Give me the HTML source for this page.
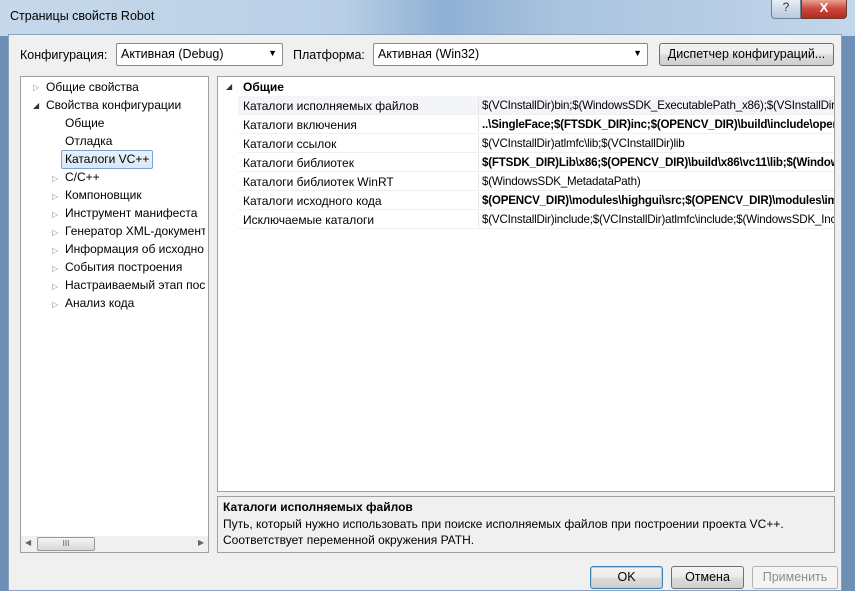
<!DOCTYPE html>
<html><head><meta charset="utf-8"><style>
*{margin:0;padding:0;box-sizing:border-box}
body{width:855px;height:591px;overflow:hidden;position:relative;font-family:"Liberation Sans",sans-serif;font-size:12px;color:#000;background:#6d8fb5}
.a{position:absolute}
.title{left:0;top:0;width:855px;height:36px;background:linear-gradient(90deg,#c6d8ea 0%,#b9cfe6 40%,#8fb0d4 52%,#a9c3de 65%,#c3d6ea 100%)}
.client{left:8px;top:34px;width:834px;height:557px;background:#f0f0f0;border:1px solid #8aa3c0}
.combo{height:23px;background:#fff;border:1px solid #8a8a8a;border-radius:2px;padding:3px 4px;font-size:12.5px}
.combo::after{content:"▼";position:absolute;right:5px;top:4px;font-size:9px}
.btn{height:23px;border:1px solid #707070;border-radius:3px;background:linear-gradient(#f2f2f2 0%,#ebebeb 50%,#dddddd 51%,#cfcfcf 100%);text-align:center;line-height:21px;font-size:12.5px}
.panel{background:#fff;border:1px solid #a0a0a0}
.tr{position:absolute;font-size:12px;white-space:nowrap}
.ar{position:absolute;font-size:8px;color:#8a8a8a}
.row{position:absolute;left:238px;width:596px;height:19px;border-bottom:1px solid #f0f0f0;white-space:nowrap;overflow:hidden}
.row .n{position:absolute;left:5px;top:3px}
.row .v{position:absolute;left:240px;width:356px;overflow:hidden;border-left:1px solid #e6e6e6;padding-left:3px;height:16px;top:1px;padding-top:2px;font-size:11.6px;letter-spacing:-0.2px}
.b{font-weight:bold}
</style></head><body>
<div class="a title"></div>
<div class="a" style="left:10px;top:9px;font-size:12.5px">Страницы свойств Robot</div>
<div class="a" style="left:771px;top:0;width:30px;height:19px;border:1px solid #6d7f99;border-top:none;border-radius:0 0 0 4px;background:linear-gradient(#e6edf5,#b9c9dd);text-align:center;font-size:12px;color:#334">?</div>
<div class="a" style="left:801px;top:0;width:46px;height:19px;border:1px solid #6b3a35;border-top:none;border-radius:0 0 4px 0;background:linear-gradient(#e8a293,#c8473a 50%,#b52b1c);text-align:center;font-weight:bold;color:#fff;font-size:13px">X</div>
<div class="a client"></div>
<div class="a" style="left:20px;top:48px;font-size:12.5px">Конфигурация:</div>
<div class="a combo" style="left:116px;top:43px;width:167px">Активная (Debug)</div>
<div class="a" style="left:293px;top:48px;font-size:12.5px">Платформа:</div>
<div class="a combo" style="left:373px;top:43px;width:275px">Активная (Win32)</div>
<div class="a btn" style="left:659px;top:43px;width:175px">Диспетчер конфигураций...</div>

<div class="a panel" style="left:20px;top:76px;width:189px;height:477px"></div>
<div class="ar" style="left:33px;top:83px">▷</div><div class="tr" style="left:46px;top:80px">Общие свойства</div>
<div class="ar" style="left:33px;top:101px;color:#333">◢</div><div class="tr" style="left:46px;top:98px">Свойства конфигурации</div>
<div class="tr" style="left:65px;top:116px">Общие</div>
<div class="tr" style="left:65px;top:134px">Отладка</div>
<div class="a" style="left:61px;top:150px;width:92px;height:19px;border:1px solid #7da2ce;border-radius:2px;background:linear-gradient(#eaf2fb,#d9e7f7)"></div>
<div class="tr" style="left:65px;top:152px">Каталоги VC++</div>
<div class="ar" style="left:52px;top:174px">▷</div><div class="tr" style="left:65px;top:170px">C/C++</div>
<div class="ar" style="left:52px;top:192px">▷</div><div class="tr" style="left:65px;top:188px">Компоновщик</div>
<div class="ar" style="left:52px;top:210px">▷</div><div class="tr" style="left:65px;top:206px">Инструмент манифеста</div>
<div class="ar" style="left:52px;top:228px">▷</div><div class="tr" style="left:65px;top:224px;width:140px;overflow:hidden">Генератор XML-документ</div>
<div class="ar" style="left:52px;top:246px">▷</div><div class="tr" style="left:65px;top:242px;width:140px;overflow:hidden">Информация об исходно</div>
<div class="ar" style="left:52px;top:264px">▷</div><div class="tr" style="left:65px;top:260px">События построения</div>
<div class="ar" style="left:52px;top:282px">▷</div><div class="tr" style="left:65px;top:278px;width:140px;overflow:hidden">Настраиваемый этап пос</div>
<div class="ar" style="left:52px;top:300px">▷</div><div class="tr" style="left:65px;top:296px">Анализ кода</div>
<div class="a" style="left:21px;top:536px;width:187px;height:16px;background:#f0f0f0"></div>
<div class="a" style="left:25px;top:538px;font-size:8px;color:#666">◀</div>
<div class="a" style="left:198px;top:538px;font-size:8px;color:#666">▶</div>
<div class="a" style="left:37px;top:537px;width:58px;height:14px;border:1px solid #999;border-radius:2px;background:linear-gradient(#f4f4f4,#d8d8d8);font-size:8px;text-align:center;line-height:12px;color:#555">III</div>

<div class="a panel" style="left:217px;top:76px;width:618px;height:416px"></div>
<div class="ar" style="left:226px;top:82px;color:#333">◢</div>
<div class="a b" style="left:243px;top:80px">Общие</div>
<div class="row" style="top:96px;background:#f3f5f8"><span class="n">Каталоги исполняемых файлов</span><span class="v">$(VCInstallDir)bin;$(WindowsSDK_ExecutablePath_x86);$(VSInstallDir)</span></div>
<div class="row" style="top:115px"><span class="n">Каталоги включения</span><span class="v b">..\SingleFace;$(FTSDK_DIR)inc;$(OPENCV_DIR)\build\include\opencv</span></div>
<div class="row" style="top:134px"><span class="n">Каталоги ссылок</span><span class="v">$(VCInstallDir)atlmfc\lib;$(VCInstallDir)lib</span></div>
<div class="row" style="top:153px"><span class="n">Каталоги библиотек</span><span class="v b">$(FTSDK_DIR)Lib\x86;$(OPENCV_DIR)\build\x86\vc11\lib;$(Windows</span></div>
<div class="row" style="top:172px"><span class="n">Каталоги библиотек WinRT</span><span class="v">$(WindowsSDK_MetadataPath)</span></div>
<div class="row" style="top:191px"><span class="n">Каталоги исходного кода</span><span class="v b">$(OPENCV_DIR)\modules\highgui\src;$(OPENCV_DIR)\modules\imgproc</span></div>
<div class="row" style="top:210px"><span class="n">Исключаемые каталоги</span><span class="v">$(VCInstallDir)include;$(VCInstallDir)atlmfc\include;$(WindowsSDK_Inc</span></div>

<div class="a" style="left:217px;top:496px;width:618px;height:57px;border:1px solid #a0a0a0;background:#f0f0f0"></div>
<div class="a b" style="left:223px;top:500px;font-size:12px">Каталоги исполняемых файлов</div>
<div class="a" style="left:223px;top:517px;font-size:12px">Путь, который нужно использовать при поиске исполняемых файлов при построении проекта VC++.</div>
<div class="a" style="left:223px;top:533px;font-size:12px">Соответствует переменной окружения PATH.</div>

<div class="a btn" style="left:590px;top:566px;width:73px;border-color:#3c7fb1;box-shadow:inset 0 0 0 1px #9fd4f5">OK</div>
<div class="a btn" style="left:671px;top:566px;width:73px">Отмена</div>
<div class="a btn" style="left:752px;top:566px;width:86px;color:#8d8d8d;border-color:#adb2b5;background:#f4f4f4">Применить</div>
</body></html>
